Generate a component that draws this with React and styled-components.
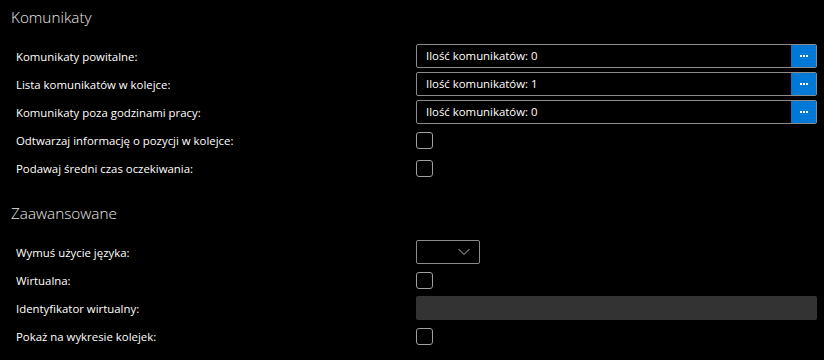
import React from "react";
import styled, { createGlobalStyle } from "styled-components";

const Global = createGlobalStyle`
  html, body { margin: 0; padding: 0; background: #000; }
  body { font-family: "Open Sans", "Noto Sans", "Liberation Sans", sans-serif; color: #fff; }
`;

const Page = styled.div`
  width: 824px;
  height: 360px;
  background: #000;
  box-sizing: border-box;
  padding: 4px 7px 0 11px;
  display: flex;
  flex-direction: column;
  gap: 20px;
`;

const Section = styled.section`
  display: flex;
  flex-direction: column;
`;

const Heading = styled.h2`
  margin: 0 0 14px 0;
  height: 26px;
  line-height: 26px;
  font-size: 15.3px;
  font-weight: 300;
  color: #e6e6e6;
`;

const Rows = styled.div`
  display: flex;
  flex-direction: column;
  gap: 4px;
`;

const Row = styled.div`
  display: grid;
  grid-template-columns: 405px 1fr;
  align-items: center;
  height: 24px;
`;

const Label = styled.span`
  padding-left: 5px;
  font-size: 11.4px;
  color: #fff;
`;

const Field = styled.div`
  display: flex;
  height: 24px;
  border: 1px solid #8c8c8c;
  border-radius: 2px;
  box-sizing: border-box;
  overflow: hidden;
`;

const FieldText = styled.span`
  flex: 1;
  padding-left: 9px;
  font-size: 11.4px;
  line-height: 22px;
  color: #fff;
`;

const DotsButton = styled.button`
  width: 26px;
  margin: -1px -1px -1px 0;
  border: none;
  border-radius: 2px;
  background: #0078d7;
  color: #fff;
  padding: 0;
  display: flex;
  align-items: center;
  justify-content: center;
  gap: 1px;
`;

const Dot = styled.i`
  width: 2px;
  height: 2px;
  background: #fff;
`;

const Check = styled.span`
  width: 17px;
  height: 17px;
  box-sizing: border-box;
  border: 1px solid #a0a0a0;
  border-radius: 3px;
`;

const Select = styled.div`
  width: 64px;
  height: 24px;
  box-sizing: border-box;
  border: 1px solid #8c8c8c;
  border-radius: 2px;
  display: flex;
  align-items: center;
  justify-content: flex-end;
  padding-right: 9px;
`;

const Disabled = styled.div`
  height: 24px;
  border-radius: 2px;
  background: #333333;
`;

const Chevron = () => (
  <svg width="12" height="8" viewBox="0 0 12 8">
    <path d="M0.5 1 L6 6.5 L11.5 1" fill="none" stroke="#bdbdbd" strokeWidth="1" />
  </svg>
);

const MsgField = ({ count }) => (
  <Field>
    <FieldText>Ilość komunikatów: {count}</FieldText>
    <DotsButton>
      <Dot />
      <Dot />
      <Dot />
    </DotsButton>
  </Field>
);

export default function App() {
  return (
    <>
      <Global />
      <Page>
        <Section>
          <Heading>Komunikaty</Heading>
          <Rows>
            <Row>
              <Label>Komunikaty powitalne:</Label>
              <MsgField count={0} />
            </Row>
            <Row>
              <Label>Lista komunikatów w kolejce:</Label>
              <MsgField count={1} />
            </Row>
            <Row>
              <Label>Komunikaty poza godzinami pracy:</Label>
              <MsgField count={0} />
            </Row>
            <Row>
              <Label>Odtwarzaj informację o pozycji w kolejce:</Label>
              <Check />
            </Row>
            <Row>
              <Label>Podawaj średni czas oczekiwania:</Label>
              <Check />
            </Row>
          </Rows>
        </Section>
        <Section>
          <Heading>Zaawansowane</Heading>
          <Rows>
            <Row>
              <Label>Wymuś użycie języka:</Label>
              <Select>
                <Chevron />
              </Select>
            </Row>
            <Row>
              <Label>Wirtualna:</Label>
              <Check />
            </Row>
            <Row>
              <Label>Identyfikator wirtualny:</Label>
              <Disabled />
            </Row>
            <Row>
              <Label>Pokaż na wykresie kolejek:</Label>
              <Check />
            </Row>
          </Rows>
        </Section>
      </Page>
    </>
  );
}
